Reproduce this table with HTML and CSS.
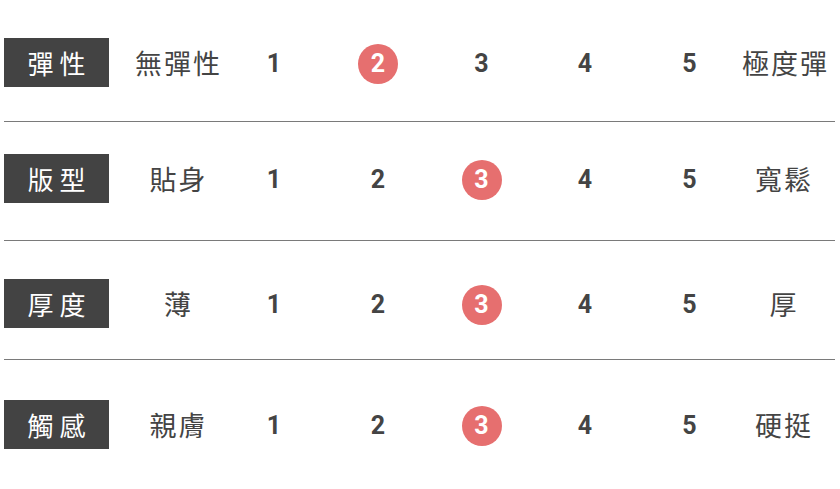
FILE: index.html
```html
<!DOCTYPE html>
<html lang="zh-Hant">
<head>
<meta charset="utf-8">
<link rel="stylesheet" href="styles.css">
</head>
<body>
<div class="chart">
  <div class="row row1">
    <div class="label">彈性</div>
    <div class="term left">無彈性</div>
    <div class="num">1</div>
    <div class="num"><span class="dot">2</span></div>
    <div class="num">3</div>
    <div class="num">4</div>
    <div class="num">5</div>
    <div class="term right">極度彈</div>
  </div>
  <div class="row row2">
    <div class="label">版型</div>
    <div class="term left">貼身</div>
    <div class="num">1</div>
    <div class="num">2</div>
    <div class="num"><span class="dot">3</span></div>
    <div class="num">4</div>
    <div class="num">5</div>
    <div class="term right">寬鬆</div>
  </div>
  <div class="row row3">
    <div class="label">厚度</div>
    <div class="term left">薄</div>
    <div class="num">1</div>
    <div class="num">2</div>
    <div class="num"><span class="dot">3</span></div>
    <div class="num">4</div>
    <div class="num">5</div>
    <div class="term right">厚</div>
  </div>
  <div class="row row4">
    <div class="label">觸感</div>
    <div class="term left">親膚</div>
    <div class="num">1</div>
    <div class="num">2</div>
    <div class="num"><span class="dot">3</span></div>
    <div class="num">4</div>
    <div class="num">5</div>
    <div class="term right">硬挺</div>
  </div>
</div>
</body>
</html>
```
FILE: styles.css
```css
html, body {
  margin: 0;
  padding: 0;
  background: #ffffff;
}
.chart {
  margin-left: 4px;
  width: 831px;
  font-family: "Noto Sans CJK TC", "Noto Sans", sans-serif;
  color: #444444;
}
.row {
  display: grid;
  grid-template-columns: 105px 113px 104px 104px 103px 104px 105px 1fr;
  align-items: center;
  height: 49px;
  border-bottom: 1px solid #7a7a7a;
}
.row1 { padding: 38px 0 34px; }
.row2 { padding: 32px 0 37px; }
.row3 { padding: 38px 0 31px; }
.row4 { padding: 40px 0 0; border-bottom: none; }
.label {
  height: 49px;
  line-height: 49px;
  background: #434343;
  color: #ffffff;
  font-size: 26px;
  letter-spacing: 6px;
  text-indent: 6px;
  text-align: center;
  white-space: nowrap;
}
.term {
  font-size: 27px;
  letter-spacing: 2px;
  height: 49px;
  display: flex;
  align-items: center;
  justify-content: center;
  white-space: nowrap;
}
.term.left { padding-left: 26px; }
.term.right { padding-right: 9px; }
.num {
  font-family: Roboto, "Liberation Sans", sans-serif;
  font-weight: 700;
  font-size: 25px;
  display: flex;
  justify-content: center;
  align-items: center;
  height: 49px;
  padding-top: 2px;
  box-sizing: border-box;
}
.dot {
  width: 40px;
  height: 40px;
  border-radius: 50%;
  background: #e66f6f;
  color: #ffffff;
  display: flex;
  align-items: center;
  justify-content: center;
}
```
